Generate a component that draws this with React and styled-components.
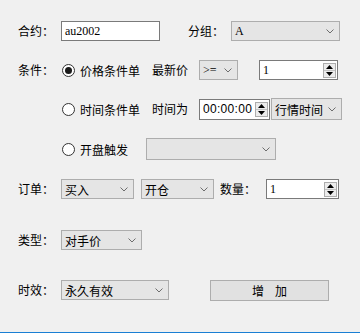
import React from 'react';
import styled, { createGlobalStyle } from 'styled-components';

const GlobalStyle = createGlobalStyle`
  html, body {
    margin: 0;
    background: #f0f0f0;
  }
  body {
    font-family: "Noto Sans CJK SC", "Liberation Sans", sans-serif;
    font-size: 12px;
    color: #000;
  }
`;

const Window = styled.div`
  width: 360px;
  height: 333px;
  box-sizing: border-box;
  padding: 20px 0 0 18px;
  border-bottom: 1px solid #1a7fd4;
  display: flex;
  flex-direction: column;
`;

const Row = styled.div`
  display: flex;
  align-items: center;
  height: 22px;
  margin-top: ${(p) => p.$top || 0}px;
`;

const Label = styled.span`
  width: 43px;
  flex-shrink: 0;
  line-height: 22px;
  white-space: nowrap;
`;

const Text = styled.span`
  margin-left: ${(p) => p.$ml || 0}px;
  white-space: nowrap;
  line-height: 22px;
`;

const TextBox = styled.div`
  width: ${(p) => p.$w}px;
  height: 20px;
  box-sizing: border-box;
  border: 1px solid #7a7a7a;
  background: #fff;
  padding-left: 3px;
  display: flex;
  align-items: center;
  font-family: "Liberation Serif", "Noto Sans CJK SC", serif;
  font-size: 12px;
`;

const Combo = styled.div`
  width: ${(p) => p.$w}px;
  height: ${(p) => p.$h || 20}px;
  margin-left: ${(p) => p.$ml || 0}px;
  box-sizing: border-box;
  border: 1px solid #adadad;
  background: #e5e5e5;
  display: flex;
  align-items: center;
  justify-content: space-between;
  padding: 0 5px 0 3px;
  flex-shrink: 0;
`;

const ComboText = styled.span`
  font-family: ${(p) => (p.$serif ? '"Liberation Serif", ' : '')}"Noto Sans CJK SC", sans-serif;
  white-space: nowrap;
`;

const Spin = styled.div`
  width: ${(p) => p.$w}px;
  height: ${(p) => p.$h || 20}px;
  margin-left: ${(p) => p.$ml || 0}px;
  box-sizing: border-box;
  border: 1px solid #7a7a7a;
  background: #fff;
  display: flex;
  align-items: center;
  justify-content: space-between;
  padding: 0 1px 0 3px;
  flex-shrink: 0;
`;

const SpinValue = styled.span`
  font-family: ${(p) => (p.$sans ? '"Liberation Sans"' : '"Liberation Serif"')}, serif;
  font-size: 12px;
  letter-spacing: ${(p) => (p.$sans ? '0.3px' : '0')};
`;

const SpinButtons = styled.div`
  width: 13px;
  height: 15px;
  box-sizing: border-box;
  border: 1px solid #adadad;
  background: #ececec;
  display: flex;
  flex-direction: column;
`;

const SpinHalf = styled.div`
  flex: 1;
  display: flex;
  align-items: center;
  justify-content: center;
  border-top: ${(p) => (p.$down ? '1px solid #c4c4c4' : 'none')};
`;

const RadioItem = styled.label`
  display: flex;
  align-items: center;
  margin-left: 1px;
`;

const RadioCircle = styled.span`
  width: 13px;
  height: 13px;
  box-sizing: border-box;
  border: 1px solid #333;
  border-radius: 50%;
  background: #fff;
  display: flex;
  align-items: center;
  justify-content: center;
  margin-right: 5px;

  &::after {
    content: '';
    display: ${(p) => (p.$checked ? 'block' : 'none')};
    width: 7px;
    height: 7px;
    border-radius: 50%;
    background: #1a1a1a;
  }
`;

const Button = styled.div`
  width: 119px;
  height: 21px;
  margin-left: 41px;
  box-sizing: border-box;
  border: 1px solid #adadad;
  background: #e1e1e1;
  display: flex;
  align-items: center;
  justify-content: center;
  gap: 11px;
`;

const Chevron = () => (
  <svg width="8" height="5" viewBox="0 0 8 5">
    <path d="M0.5 0.5 L4 4 L7.5 0.5" fill="none" stroke="#6d6d6d" strokeWidth="1" />
  </svg>
);

const Arrow = ({ down }) => (
  <svg width="7" height="4" viewBox="0 0 7 4">
    <path d={down ? 'M0 0 L7 0 L3.5 4 Z' : 'M0 4 L7 4 L3.5 0 Z'} fill="#000" />
  </svg>
);

const Select = ({ w, h, ml, value, serif }) => (
  <Combo $w={w} $h={h} $ml={ml}>
    <ComboText $serif={serif}>{value}</ComboText>
    <Chevron />
  </Combo>
);

const SpinBox = ({ w, h, ml, value, sans }) => (
  <Spin $w={w} $h={h} $ml={ml}>
    <SpinValue $sans={sans}>{value}</SpinValue>
    <SpinButtons>
      <SpinHalf><Arrow /></SpinHalf>
      <SpinHalf $down><Arrow down /></SpinHalf>
    </SpinButtons>
  </Spin>
);

const Radio = ({ checked, children }) => (
  <RadioItem>
    <RadioCircle $checked={checked} />
    {children}
  </RadioItem>
);

export default function App() {
  return (
    <>
      <GlobalStyle />
      <Window>
        <Row>
          <Label>合约：</Label>
          <TextBox $w={99}>au2002</TextBox>
          <Label style={{ marginLeft: 28 }}>分组：</Label>
          <Select w={109} value="A" serif />
        </Row>

        <Row $top={17}>
          <Label>条件：</Label>
          <Radio checked>价格条件单</Radio>
          <Text $ml={12}>最新价</Text>
          <Select w={39} ml={11} value=">=" serif />
          <SpinBox w={79} ml={21} value="1" />
        </Row>

        <Row $top={17}>
          <Label />
          <Radio>时间条件单</Radio>
          <Text $ml={12}>时间为</Text>
          <SpinBox w={71} h={21} ml={11} value="00:00:00" sans />
          <Select w={71} h={22} ml={1} value="行情时间" />
        </Row>

        <Row $top={18}>
          <Label />
          <Radio>开盘触发</Radio>
          <Select w={130} h={22} ml={18} value="" />
        </Row>

        <Row $top={18}>
          <Label>订单：</Label>
          <Select w={73} value="买入" />
          <Select w={73} ml={7} value="开仓" />
          <Text $ml={6}>数量：</Text>
          <SpinBox w={73} ml={10} value="1" />
        </Row>

        <Row $top={29}>
          <Label>类型：</Label>
          <Select w={81} value="对手价" />
        </Row>

        <Row $top={28}>
          <Label>时效：</Label>
          <Select w={108} value="永久有效" />
          <Button>
            <span>增</span>
            <span>加</span>
          </Button>
        </Row>
      </Window>
    </>
  );
}
